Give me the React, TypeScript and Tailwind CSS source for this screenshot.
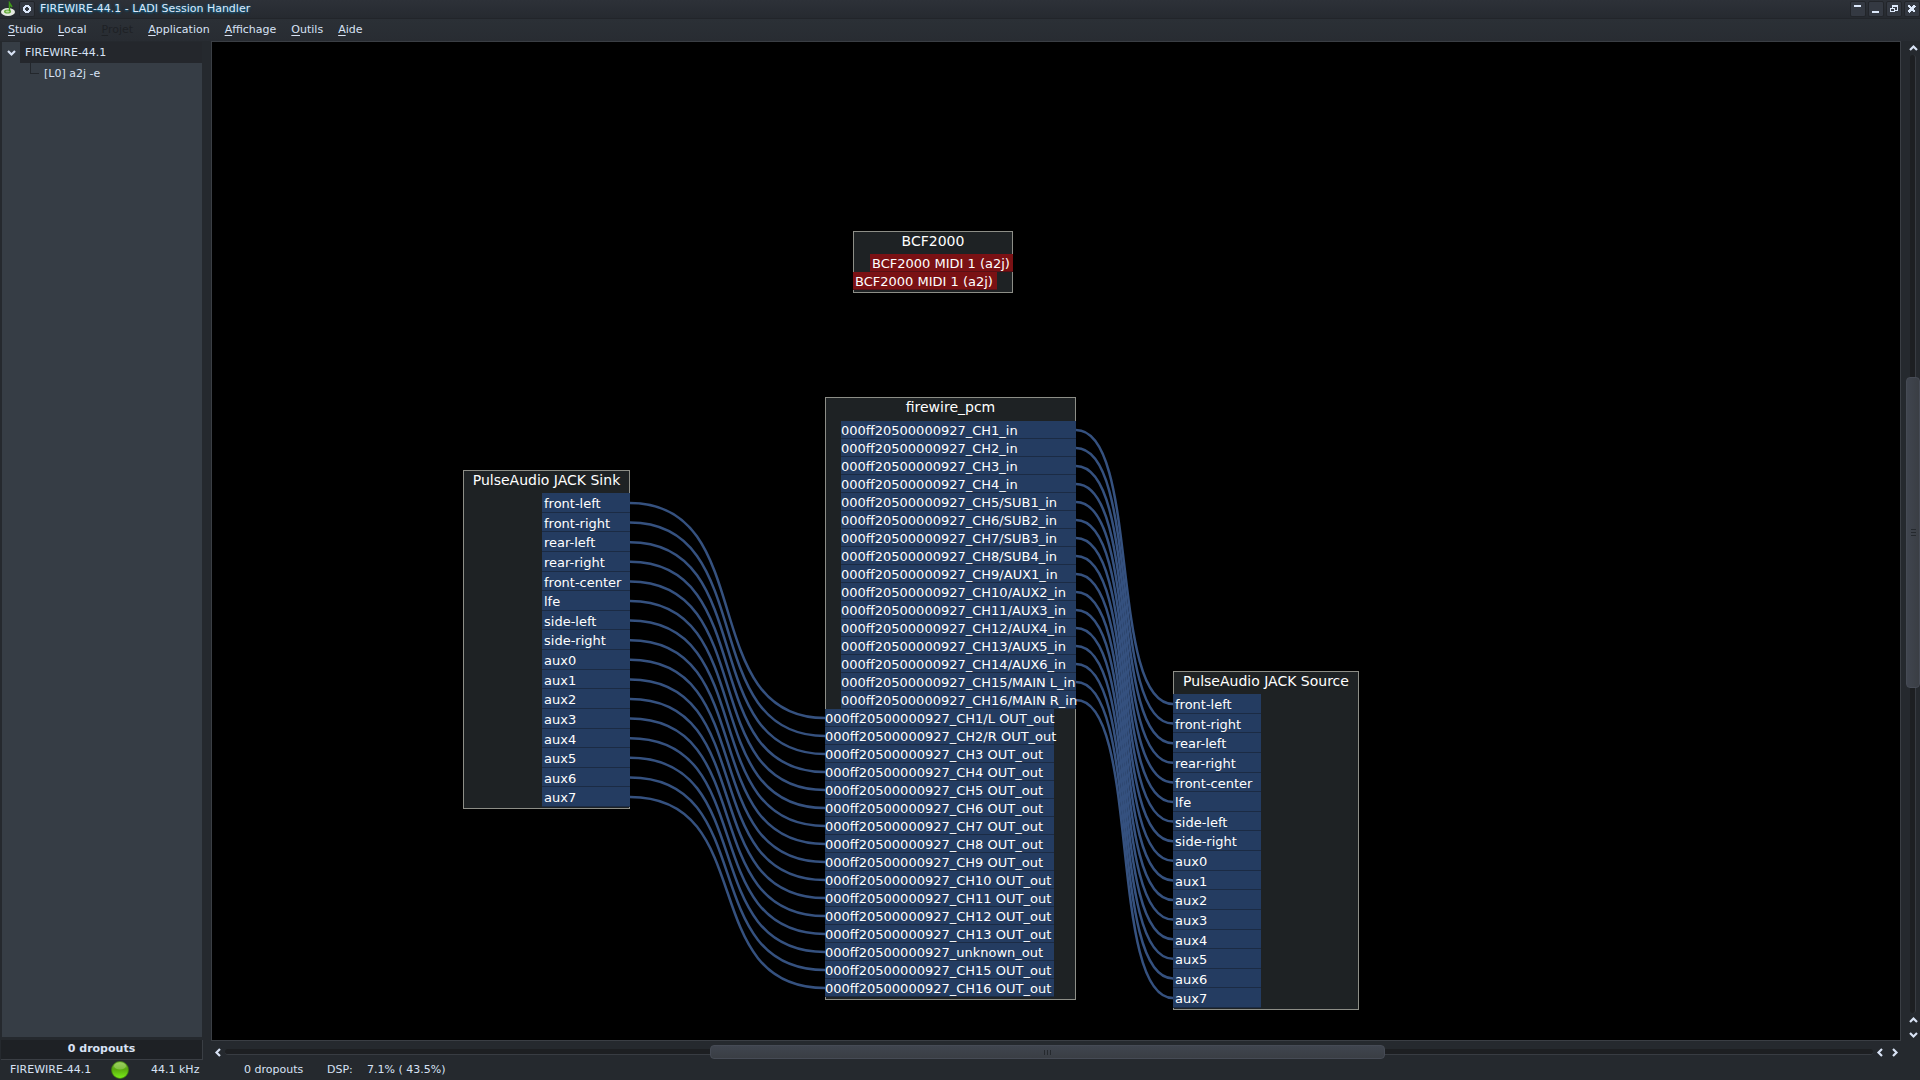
import clsx from "clsx";

const MENUS = [
  { label: "Studio" },
  { label: "Local" },
  { label: "Projet", disabled: true },
  { label: "Application" },
  { label: "Affichage" },
  { label: "Outils" },
  { label: "Aide" },
];

const PULSE_PORTS = [
  "front-left", "front-right", "rear-left", "rear-right", "front-center", "lfe", "side-left", "side-right",
  "aux0", "aux1", "aux2", "aux3", "aux4", "aux5", "aux6", "aux7",
];

const FW = "000ff20500000927_";

const FW_IN = [
  "CH1", "CH2", "CH3", "CH4", "CH5/SUB1", "CH6/SUB2", "CH7/SUB3", "CH8/SUB4", "CH9/AUX1", "CH10/AUX2",
  "CH11/AUX3", "CH12/AUX4", "CH13/AUX5", "CH14/AUX6", "CH15/MAIN L", "CH16/MAIN R",
].map((c) => `${FW}${c}_in`);

const FW_OUT = [
  "CH1/L OUT", "CH2/R OUT", "CH3 OUT", "CH4 OUT", "CH5 OUT", "CH6 OUT", "CH7 OUT", "CH8 OUT", "CH9 OUT",
  "CH10 OUT", "CH11 OUT", "CH12 OUT", "CH13 OUT", "unknown", "CH15 OUT", "CH16 OUT",
].map((c) => `${FW}${c}_out`);

// Cable ends in canvas coordinates: first port centre and distance between ports
const BUNDLES = [
  { x1: 418, y1: 461, step1: 19.6, x2: 613, y2: 676, step2: 18 },
  { x1: 864, y1: 388, step1: 18, x2: 961, y2: 662, step2: 19.6 },
];

// Two mirrored curves that meet halfway between the ports
function cable(x1: number, y1: number, x2: number, y2: number) {
  const pull = (x2 - x1) / 3;
  const jx = (x1 + x2) / 2;
  const jy = (y1 + y2) / 2;
  const a = x1 + pull;
  const b = x2 - pull;
  return `M${x1} ${y1}C${a} ${y1} ${(a + jx) / 2} ${(y1 + jy) / 2} ${jx} ${jy}C${(b + jx) / 2} ${(y2 + jy) / 2} ${b} ${y2} ${x2} ${y2}`;
}

function Ports({ names, className, portClass }: { names: string[]; className: string; portClass: string }) {
  return (
    <ul className={clsx("grid auto-rows-[minmax(0,1fr)] grid-cols-[minmax(0,1fr)] text-[13px] leading-[17px]", className)}>
      {names.map((n) => (
        <li key={n} className={clsx("border-b whitespace-nowrap", portClass)}>{n}</li>
      ))}
    </ul>
  );
}

function Node({ title, className, children }: { title: string; className: string; children: React.ReactNode }) {
  return (
    <section className={clsx("absolute flex flex-col bg-[#1e2224] text-white shadow-[inset_0_0_0_1px_#8d8e87]", className)}>
      <h2 className="h-[23px] shrink-0 pt-px text-center text-[14px] leading-[18px] whitespace-nowrap">{title}</h2>
      {children}
    </section>
  );
}

const ARROWS = {
  up: "M1 6L4.5 2.5L8 6",
  down: "M1 3L4.5 6.5L8 3",
  left: "M6 1L2.5 4.5L6 8",
  right: "M3 1L6.5 4.5L3 8",
};

function Arrow({ dir }: { dir: keyof typeof ARROWS }) {
  return (
    <svg width="9" height="9" viewBox="0 0 9 9" fill="none" stroke="#d8e2f4" strokeWidth="2.2">
      <path d={ARROWS[dir]} />
    </svg>
  );
}

function ScrollButton({ dir }: { dir: keyof typeof ARROWS }) {
  return (
    <button aria-label={`Scroll ${dir}`} className="flex size-[14px] shrink-0 items-center justify-center">
      <Arrow dir={dir} />
    </button>
  );
}

function WindowButton({ label, children }: { label: string; children: React.ReactNode }) {
  return (
    <button aria-label={label} className="size-4 rounded-[2px] border border-[#22252a] bg-[#343942]">
      <svg width="14" height="14" viewBox="0 0 14 14" fill="none" stroke="#dce8fa" shapeRendering="crispEdges">
        {children}
      </svg>
    </button>
  );
}

function TitleBar() {
  return (
    <header className="flex h-[18px] shrink-0 items-center bg-linear-to-b from-[#2d3138] to-[#262a30]">
      <svg width="17" height="17" viewBox="0 0 17 17" className="mr-[2px]">
        <ellipse cx="8" cy="11" rx="7" ry="4" fill="#e4e8e0" />
        <ellipse cx="7.500" cy="10.500" rx="3.500" ry="2" fill="#62a83a" />
        <path d="M9.500 10V2L12 6" stroke="#3f9a18" strokeWidth="1.500" fill="none" />
        <ellipse cx="7.500" cy="10.500" rx="2" ry="1" fill="#b7dd9a" />
      </svg>
      <WindowButton label="Window menu">
        <path d="M5 3h4v1h1v1h1v4h-1v1h-1v1h-4v-1h-1v-1h-1v-4h1v-1h1zM6 5v1h-1v2h1v1h2v-1h1v-2h-1v-1z" fill="#dce8fa" fillRule="evenodd" stroke="none" />
      </WindowButton>
      <h1 className="ml-[5px] flex-1 text-[11px] text-[#dce8fa] [text-shadow:0_0_3px_#14648c,0_1px_2px_#14648c]">
        FIREWIRE-44.1 - LADI Session Handler
      </h1>
      <div className="flex gap-[2px]">
        <WindowButton label="Shade">
          <path d="M3 4h7" strokeWidth="2" />
        </WindowButton>
        <WindowButton label="Minimize">
          <path d="M3 10h7" strokeWidth="2" />
        </WindowButton>
        <WindowButton label="Restore">
          <path d="M5.500 6V3.500H10.500V8.500H8M3.500 6.500H7.500V9.500H3.500zM3 6h5M5 4h6" />
        </WindowButton>
        <WindowButton label="Close">
          <path d="M3.500 3.500L10 10M10 3.500L3.500 10" strokeWidth="2.500" />
        </WindowButton>
      </div>
    </header>
  );
}

function MenuBar() {
  return (
    <nav className="flex h-[23px] shrink-0 items-center gap-[15px] border-t border-[#22252a] bg-linear-to-b from-[#2b3036] to-[#282c32] pl-[8px]">
      {MENUS.map(({ label, disabled }) => (
        <button key={label} disabled={disabled} className={disabled ? "text-[#1e2125]" : ""}>
          <span className="underline underline-offset-2">{label[0]}</span>
          {label.slice(1)}
        </button>
      ))}
    </nav>
  );
}

function Sidebar() {
  return (
    <aside className="flex w-[204px] shrink-0 flex-col">
      <ul className="mx-[2px] mt-px flex-1 bg-[#363d45] leading-[21px]">
        <li>
          <div className="flex">
            <button aria-label="Collapse" className="flex h-[21px] w-[18px] items-center justify-center">
              <Arrow dir="down" />
            </button>
            <span className="flex-1 bg-[#24272c] pl-[5px]">FIREWIRE-44.1</span>
          </div>
          <ul>
            <li className="flex">
              <span className="ml-7 h-[11px] w-[9px] border-b border-l border-[#23272c]" />
              <span className="ml-[5px]">[L0] a2j -e</span>
            </li>
          </ul>
        </li>
      </ul>
      <div className="mx-px mt-[3px] h-[20px] border-r border-b border-[#3a3e44] bg-[#1e2125] text-center text-[11px] leading-[18px] font-bold">
        0 dropouts
      </div>
    </aside>
  );
}

function Canvas() {
  return (
    <div className="relative min-w-0 flex-1 overflow-hidden bg-black">
      <svg className="absolute inset-0 size-full" fill="none" stroke="#35517f" strokeWidth="2.5">
        {BUNDLES.map((b) =>
          PULSE_PORTS.map((p, i) => (
            <path key={`${b.x1}-${p}`} d={cable(b.x1, b.y1 + i * b.step1, b.x2, b.y2 + i * b.step2)} />
          ))
        )}
      </svg>

      <Node title="BCF2000" className="top-[189px] left-[641px] h-[62px] w-[160px]">
        <Ports names={["BCF2000 MIDI 1 (a2j)"]} className="h-[18px] w-[143px] self-end" portClass="border-[#571015] bg-[#7a1114] pt-px pl-[2px]" />
        <Ports names={["BCF2000 MIDI 1 (a2j)"]} className="h-[18px] w-[144px]" portClass="border-[#571015] bg-[#7a1114] pt-px pl-[2px]" />
      </Node>

      <Node title="firewire_pcm" className="top-[355px] left-[613px] h-[603px] w-[251px]">
        <Ports names={FW_IN} className="mt-px h-[288px] w-[235px] self-end" portClass="border-[#1b2b44] bg-[#243c61] pt-px" />
        <Ports names={FW_OUT} className="h-[288px] w-[229px]" portClass="border-[#1b2b44] bg-[#243c61] pt-px" />
      </Node>

      <Node title="PulseAudio JACK Sink" className="top-[428px] left-[251px] h-[339px] w-[167px]">
        <Ports names={PULSE_PORTS} className="h-[314px] w-[88px] self-end" portClass="border-[#1b2b44] bg-[#243c61] pt-[2px] pl-[2px]" />
      </Node>

      <Node title="PulseAudio JACK Source" className="top-[629px] left-[961px] h-[339px] w-[186px]">
        <Ports names={PULSE_PORTS} className="h-[314px] w-[88px]" portClass="border-[#1b2b44] bg-[#243c61] pt-[2px] pl-[2px]" />
      </Node>
    </div>
  );
}

function VerticalScroll() {
  return (
    <div className="flex w-[19px] shrink-0 flex-col items-center pl-[5px]">
      <ScrollButton dir="up" />
      <div className="flex w-[14px] flex-1 flex-col items-center">
        <div className="w-[6px] flex-[322] rounded-t-[3px] border-r border-[#383c42] bg-[#1d1f22]" />
        <div className="flex w-[14px] flex-[309] flex-col items-center justify-center gap-[2px] rounded-[4px] border border-[#464b55] bg-linear-to-r from-[#40454f] to-[#3a3e44]">
          <i className="h-px w-[5px] bg-[#25292e]" />
          <i className="h-px w-[5px] bg-[#25292e]" />
          <i className="h-px w-[5px] bg-[#25292e]" />
        </div>
        <div className="w-[6px] flex-[325] rounded-b-[3px] border-r border-[#383c42] bg-[#1d1f22]" />
      </div>
      <ScrollButton dir="up" />
      <ScrollButton dir="down" />
    </div>
  );
}

function HorizontalScroll() {
  return (
    <div className="mr-[19px] flex h-[19px] items-end pb-px">
      <ScrollButton dir="left" />
      <div className="flex h-[14px] flex-1 items-center">
        <div className="h-[6px] flex-[485] rounded-l-[3px] border-b border-[#383c42] bg-[#1d1f22]" />
        <div className="flex h-[14px] flex-[673] items-center justify-center gap-[2px] rounded-[4px] border border-[#464b55] bg-linear-to-b from-[#40454f] to-[#3a3e44]">
          <i className="h-[5px] w-px bg-[#25292e]" />
          <i className="h-[5px] w-px bg-[#25292e]" />
          <i className="h-[5px] w-px bg-[#25292e]" />
        </div>
        <div className="h-[6px] flex-[488] rounded-r-[3px] border-b border-[#383c42] bg-[#1d1f22]" />
      </div>
      <ScrollButton dir="left" />
      <ScrollButton dir="right" />
    </div>
  );
}

function StatusBar() {
  return (
    <footer className="flex h-5 shrink-0 items-center pl-[10px] whitespace-pre">
      <span className="w-[101px]">FIREWIRE-44.1</span>
      <svg width="18" height="18" viewBox="0 0 18 18">
        <defs>
          <linearGradient id="led" x1="0" y1="0" x2="0" y2="1">
            <stop offset="0" stopColor="#8cc84a" />
            <stop offset="0.45" stopColor="#58a80e" />
            <stop offset="1" stopColor="#7cf01a" />
          </linearGradient>
        </defs>
        <circle cx="9" cy="9" r="8.500" fill="url(#led)" stroke="#3f7a10" strokeWidth="0.800" />
        <ellipse cx="9" cy="5" rx="6" ry="3.500" fill="#b4dc80" opacity="0.45" />
      </svg>
      <span className="ml-[22px] w-[93px]">44.1 kHz</span>
      <span className="w-[83px]">0 dropouts</span>
      <span className="w-[40px]">DSP:</span>
      <span>7.1% ( 43.5%)</span>
    </footer>
  );
}

export default function App() {
  return (
    <div className="flex h-screen flex-col overflow-hidden bg-[#25292e] font-['DejaVu_Sans',sans-serif] text-[11px] text-[#d8e2f4]">
      <TitleBar />
      <MenuBar />
      <main className="flex min-h-0 flex-1">
        <Sidebar />
        <div className="ml-[7px] flex min-w-0 flex-1 flex-col">
          <div className="flex min-h-0 flex-1">
            <div className="flex min-w-0 flex-1 border border-[#3a3e44]">
              <Canvas />
            </div>
            <VerticalScroll />
          </div>
          <HorizontalScroll />
        </div>
      </main>
      <StatusBar />
    </div>
  );
}
